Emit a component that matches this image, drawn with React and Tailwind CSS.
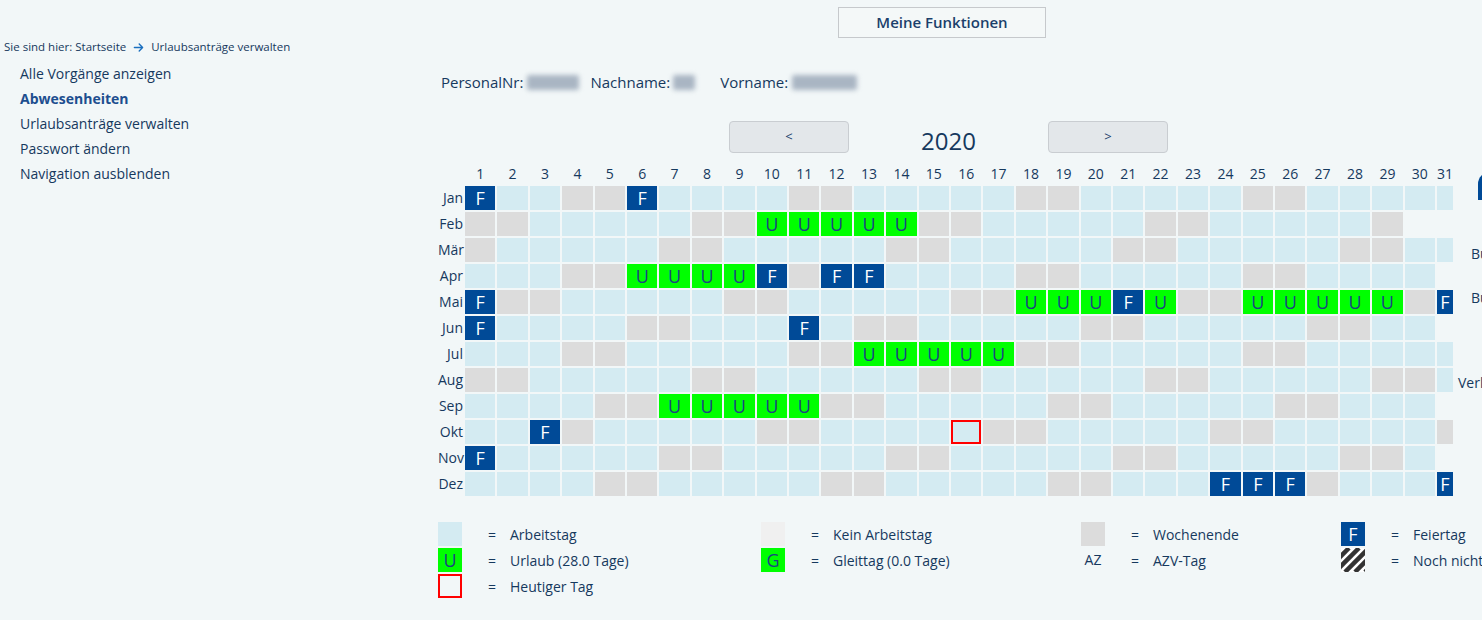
import React from 'react';

const MONTHS = ['Jan', 'Feb', 'Mär', 'Apr', 'Mai', 'Jun', 'Jul', 'Aug', 'Sep', 'Okt', 'Nov', 'Dez'];

const HOLIDAYS = new Set([
  '0-1', '0-6', '3-10', '3-12', '3-13', '4-1', '4-21', '4-31', '5-1', '5-11',
  '9-3', '10-1', '11-24', '11-25', '11-26', '11-31',
]);

const VACATION = new Set([
  '1-10', '1-11', '1-12', '1-13', '1-14',
  '3-6', '3-7', '3-8', '3-9',
  '4-18', '4-19', '4-20', '4-22', '4-25', '4-26', '4-27', '4-28', '4-29',
  '6-13', '6-14', '6-15', '6-16', '6-17',
  '8-7', '8-8', '8-9', '8-10', '8-11',
]);

const TODAY = '9-16';

function cellType(m, d) {
  const key = `${m}-${d}`;
  if (HOLIDAYS.has(key)) return 'F';
  if (VACATION.has(key)) return 'U';
  const wd = new Date(2020, m, d).getDay();
  if (wd === 0 || wd === 6) return 'W';
  return 'A';
}

function DayCell({ m, d }) {
  const days = new Date(2020, m + 1, 0).getDate();
  if (d > days) return <div className="h-[24px]" />;
  const t = cellType(m, d);
  const today = `${m}-${d}` === TODAY;
  if (t === 'F')
    return (
      <div className="h-[24px] bg-[#004a97] text-white text-[18px] leading-[24px] text-center">F</div>
    );
  if (t === 'U')
    return (
      <div className="h-[24px] bg-[#00ff00] text-[#1b4482] text-[18px] leading-[24px] text-center">U</div>
    );
  if (t === 'W') return <div className="h-[24px] bg-[#dcdcdc]" />;
  return (
    <div
      className={
        today
          ? 'h-[24px] bg-[#d4ebf2] border-2 border-[#ff0000]'
          : 'h-[24px] bg-[#d4ebf2]'
      }
    />
  );
}

function Calendar() {
  const days = Array.from({ length: 31 }, (_, i) => i + 1);
  return (
    <div className="grid grid-cols-[25px_repeat(30,minmax(0,1fr))_16px] gap-[2px] w-[1015px] mt-[7px]">
      <div className="h-[20px]" />
      {days.map((d) => (
        <div key={`h${d}`} className="h-[20px] text-[14px] leading-[20px] text-center whitespace-nowrap">
          {d}
        </div>
      ))}
      {MONTHS.map((name, m) => (
        <React.Fragment key={name}>
          <div className="h-[24px] text-[14px] leading-[24px] text-right whitespace-nowrap">{name}</div>
          {days.map((d) => (
            <DayCell key={`${m}-${d}`} m={m} d={d} />
          ))}
        </React.Fragment>
      ))}
    </div>
  );
}

function LegendItem({ swatch, label }) {
  return (
    <div className="flex items-center h-[24px] whitespace-nowrap">
      <div className="w-[24px] h-[24px] shrink-0">{swatch}</div>
      <span className="ml-[26px] text-[14px]">=</span>
      <span className="ml-[14px] text-[14px]">{label}</span>
    </div>
  );
}

function Stripes() {
  return (
    <svg width="24" height="24" viewBox="0 0 24 24">
      <defs>
        <clipPath id="sw">
          <rect x="0" y="0" width="24" height="24" />
        </clipPath>
      </defs>
      <rect x="0" y="0" width="24" height="24" fill="#ffffff" />
      <g clipPath="url(#sw)" stroke="#333333" strokeWidth="4.5">
        <line x1="-26" y1="24" x2="-2" y2="0" />
        <line x1="-16" y1="24" x2="8" y2="0" />
        <line x1="-6" y1="24" x2="18" y2="0" />
        <line x1="4" y1="24" x2="28" y2="0" />
        <line x1="14" y1="24" x2="38" y2="0" />
        <line x1="24" y1="24" x2="48" y2="0" />
      </g>
    </svg>
  );
}

function Legend() {
  return (
    <div className="grid grid-cols-[323px_320px_260px_300px] gap-y-[2px] w-[1203px] mt-[26px]">
      <LegendItem swatch={<div className="w-full h-full bg-[#d4ebf2]" />} label="Arbeitstag" />
      <LegendItem swatch={<div className="w-full h-full bg-[#f0f0f0]" />} label="Kein Arbeitstag" />
      <LegendItem swatch={<div className="w-full h-full bg-[#dcdcdc]" />} label="Wochenende" />
      <LegendItem
        swatch={
          <div className="w-full h-full bg-[#004a97] text-white text-[18px] leading-[24px] text-center">F</div>
        }
        label="Feiertag"
      />
      <LegendItem
        swatch={
          <div className="w-full h-full bg-[#00ff00] text-[#1b4482] text-[18px] leading-[24px] text-center">U</div>
        }
        label="Urlaub (28.0 Tage)"
      />
      <LegendItem
        swatch={
          <div className="w-full h-full bg-[#00ff00] text-[#1b4482] text-[18px] leading-[24px] text-center">G</div>
        }
        label="Gleittag (0.0 Tage)"
      />
      <LegendItem
        swatch={<div className="w-full h-full text-[14px] leading-[24px] text-center">AZ</div>}
        label="AZV-Tag"
      />
      <LegendItem swatch={<Stripes />} label="Noch nicht genehmigt" />
      <LegendItem swatch={<div className="w-full h-full border-2 border-[#ff0000]" />} label="Heutiger Tag" />
    </div>
  );
}

function Blur({ w }) {
  return (
    <span
      className={`inline-block align-middle h-[15px] bg-[#a9b5c3] blur-[2.5px] rounded-[2px] ${w}`}
    />
  );
}

export default function App() {
  return (
    <div className="w-[1482px] h-[620px] overflow-hidden bg-[#f2f7f8] text-[#16395e] font-['Open_Sans','Noto_Sans',sans-serif] flex">
      <aside className="w-[438px] shrink-0 pt-[40px]">
        <div className="pl-[4px] flex items-center text-[11.5px] leading-[14px] whitespace-nowrap">
          <span>Sie sind hier: Startseite</span>
          <svg className="mx-[7px]" width="11" height="11" viewBox="0 0 448 512" fill="#1a6fbf">
            <path d="M438.6 278.6c12.5-12.5 12.5-32.8 0-45.3l-160-160c-12.5-12.5-32.8-12.5-45.3 0s-12.5 32.8 0 45.3L338.8 224H32c-17.7 0-32 14.3-32 32s14.3 32 32 32h306.7L233.4 393.4c-12.5 12.5-12.5 32.8 0 45.3s32.8 12.5 45.3 0l160-160z" />
          </svg>
          <span>Urlaubsanträge verwalten</span>
        </div>
        <ul className="pl-[20px] mt-[7px] text-[14px] leading-[25px]">
          <li>Alle Vorgänge anzeigen</li>
          <li className="font-bold text-[#1d4e8f]">Abwesenheiten</li>
          <li>Urlaubsanträge verwalten</li>
          <li>Passwort ändern</li>
          <li>Navigation ausblenden</li>
        </ul>
      </aside>

      <main className="w-[1015px] shrink-0 pt-[7px]">
        <button className="ml-[400px] w-[208px] h-[31px] border border-[#c6c9cc] bg-[#f4f8f8] text-[15px] font-semibold text-[#1b3f6b]">
          Meine Funktionen
        </button>

        <div className="mt-[34px] pl-[3px] text-[15px] leading-[20px] flex items-center whitespace-nowrap">
          <span>PersonalNr:</span>
          <span className="ml-[4px] flex"><Blur w="w-[52px]" /></span>
          <span className="ml-[11px]">Nachname:</span>
          <span className="ml-[3px] flex"><Blur w="w-[22px]" /></span>
          <span className="ml-[25px]">Vorname:</span>
          <span className="ml-[4px] flex"><Blur w="w-[65px]" /></span>
        </div>

        <div className="mt-[29px] ml-[291px] flex items-start">
          <button className="w-[120px] h-[32px] rounded-[4px] border border-[#c9cdd1] bg-[#e3e7ea] text-[13px] text-[#1b3f6b]">
            &lt;
          </button>
          <div className="w-[199px] mt-[4px] text-center text-[24px] leading-[32px]">2020</div>
          <button className="w-[120px] h-[32px] rounded-[4px] border border-[#c9cdd1] bg-[#e3e7ea] text-[13px] text-[#1b3f6b]">
            &gt;
          </button>
        </div>

        <Calendar />
        <Legend />
      </main>

      <div className="flex-1 min-w-0 text-[14px] leading-[20px] whitespace-nowrap">
        <div className="mt-[172px] ml-[25px] w-[30px] h-[28px] rounded-tl-[12px] bg-[#004a97]" />
        <div className="mt-[44px] pl-[18px]">Budget</div>
        <div className="mt-[24px] pl-[18px]">Buchungen</div>
        <div className="mt-[65px] pl-[5px]">Verlauf</div>
      </div>
    </div>
  );
}
